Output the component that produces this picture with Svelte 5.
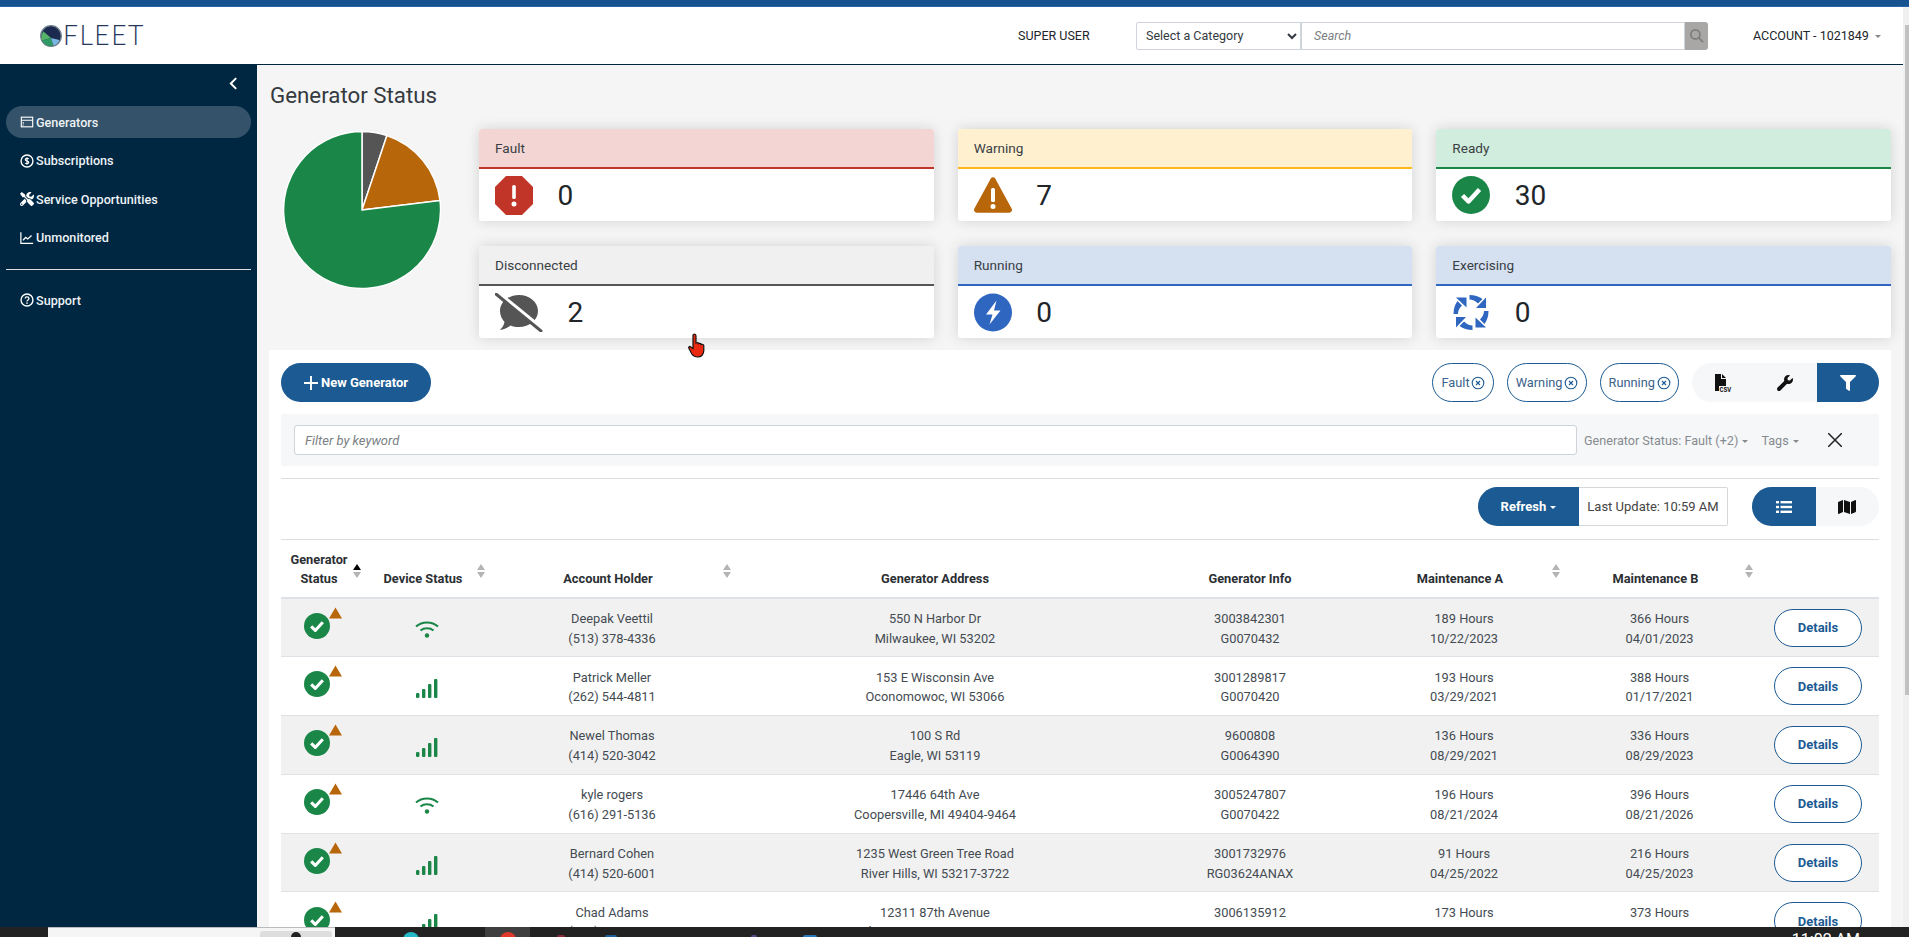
<script>
  const nav = [
    { id: 'gen', label: 'Generators', active: true },
    { id: 'sub', label: 'Subscriptions' },
    { id: 'svc', label: 'Service Opportunities' },
    { id: 'unm', label: 'Unmonitored' }
  ];
  const cards = [
    { key: 'fault', label: 'Fault', n: 0 },
    { key: 'warning', label: 'Warning', n: 7 },
    { key: 'ready', label: 'Ready', n: 30 },
    { key: 'disc', label: 'Disconnected', n: 2 },
    { key: 'running', label: 'Running', n: 0 },
    { key: 'exercising', label: 'Exercising', n: 0 }
  ];
  const rows = [
    ['Deepak Veettil', '(513) 378-4336', '550 N Harbor Dr', 'Milwaukee, WI 53202', '3003842301', 'G0070432', '189 Hours', '10/22/2023', '366 Hours', '04/01/2023', 'wifi'],
    ['Patrick Meller', '(262) 544-4811', '153 E Wisconsin Ave', 'Oconomowoc, WI 53066', '3001289817', 'G0070420', '193 Hours', '03/29/2021', '388 Hours', '01/17/2021', 'bars'],
    ['Newel Thomas', '(414) 520-3042', '100 S Rd', 'Eagle, WI 53119', '9600808', 'G0064390', '136 Hours', '08/29/2021', '336 Hours', '08/29/2023', 'bars'],
    ['kyle rogers', '(616) 291-5136', '17446 64th Ave', 'Coopersville, MI 49404-9464', '3005247807', 'G0070422', '196 Hours', '08/21/2024', '396 Hours', '08/21/2026', 'wifi'],
    ['Bernard Cohen', '(414) 520-6001', '1235 West Green Tree Road', 'River Hills, WI 53217-3722', '3001732976', 'RG03624ANAX', '91 Hours', '04/25/2022', '216 Hours', '04/25/2023', 'bars'],
    ['Chad Adams', '(414) 444-4444', '12311 87th Avenue', 'Pleasant Prairie, WI 53158', '3006135912', 'G0070000', '173 Hours', '10/06/2023', '373 Hours', '10/05/2025', 'bars']
  ];
  const toolsD = 'M501.1 395.7L384 278.6c-23.1-23.1-57.6-27.6-85.4-13.9L192 158.1V96L64 0 0 64l96 128h62.1l106.6 106.6c-13.6 27.8-9.2 62.3 13.9 85.4l117.1 117.1c14.6 14.6 38.2 14.6 52.7 0l52.7-52.7c14.5-14.6 14.5-38.2 0-52.7zM331.7 225c28.3 0 54.9 11 74.9 31l19.4 19.4c15.8-6.9 30.8-16.5 43.8-29.5 37.1-37.1 49.7-89.3 37.9-136.7-2.2-9-13.5-12.1-20.1-5.5l-74.4 74.4-67.9-11.3L334 98.9l74.4-74.4c6.6-6.6 3.4-17.9-5.7-20.2-47.4-11.7-99.6.9-136.6 37.9-28.5 28.5-41.9 66.1-41.2 103.6l82.1 82.1c8.1-1.9 16.5-2.9 24.7-2.9zm-103.9 82l-56.7-56.7L18.7 402.8c-25 25-25 65.5 0 90.5s65.5 25 90.5 0l123.6-123.6c-7.6-19.9-9.9-41.6-5-62.7zM64 472c-13.2 0-24-10.8-24-24 0-13.3 10.7-24 24-24s24 10.7 24 24c0 13.2-10.7 24-24 24z';
</script>

{#snippet sortIcon(active)}
  <svg class="sort" viewBox="0 0 8 14" width="8" height="14">
    <path d="M4 0 8 6H0z" fill={active ? '#000' : '#b4b4b4'} />
    <path d="M4 14 0 8h8z" fill="#b4b4b4" />
  </svg>
{/snippet}

{#snippet chipX()}
  <svg class="chipx" viewBox="0 0 14 14" width="14" height="14" fill="none" stroke="#1b5a92" stroke-width="1.1">
    <circle cx="7" cy="7" r="5.8" />
    <path d="M5 5l4 4M9 5l-4 4" />
  </svg>
{/snippet}

{#snippet caret()}
  <span class="caret"></span>
{/snippet}

{#snippet checkCircle(size)}
  <svg viewBox="0 0 38 38" width={size} height={size}>
    <circle cx="19" cy="19" r="19" fill="#1a8647" />
    <path d="M10.5 19.500 16.500 25.500 27.500 13.500" fill="none" stroke="#fff" stroke-width="4.500" stroke-linejoin="round" />
  </svg>
{/snippet}

{#snippet navIcon(id)}
  <svg class="navicon" viewBox="0 0 16 16" width="14" height="14" fill="none" stroke="#fff" stroke-width="1.3">
    {#if id === 'gen'}
      <rect x="1.500" y="2.500" width="13" height="11" />
      <path d="M1.500 6h13M3 9h1.500M3 11.500h1" />
    {:else if id === 'sub'}
      <circle cx="8" cy="8" r="6.800" stroke-width="1.600" />
      <path d="M10 5.600C9.400 4.900 6.200 4.600 6 6.400c-.2 2 4.200 1.200 4 3.200-.2 1.800-3.600 1.500-4.200.7M8 3.800v8.400" />
    {:else if id === 'svc'}
      <path d={toolsD} fill="#fff" stroke="none" transform="scale(.03125)" />
    {:else if id === 'unm'}
      <path d="M1 1.500v12.600h14" stroke-width="1.400" />
      <path d="M3.500 10.500l3-3.200 2.400 1.800 4.300-4" stroke-width="1.500" />
    {:else}
      <circle cx="8" cy="8" r="6.800" stroke-width="1.600" />
      <path d="M5.900 6.200C6 3.800 10.200 3.800 10.200 6.200c0 1.800-2.200 1.600-2.200 3.400" stroke-width="1.500" />
      <circle cx="8" cy="11.600" r=".9" fill="#fff" stroke="none" />
    {/if}
  </svg>
{/snippet}

{#snippet cardIcon(key)}
  {#if key === 'fault'}
    <svg class="cicon" viewBox="0 0 38 39" width="38" height="39">
      <path d="M11 0h16l11 11v17L27 39H11L0 28V11z" fill="#c13529" />
      <rect x="17.200" y="9" width="3.600" height="14" rx="1.600" fill="#fff" />
      <circle cx="19" cy="28" r="2.500" fill="#fff" />
    </svg>
  {:else if key === 'warning'}
    <svg class="cicon" viewBox="0 0 38 36" width="38" height="36">
      <path d="M16.800 1.500a2.600 2.600 0 0 1 4.400 0L37.600 31.500a2.800 2.800 0 0 1-2.400 4.200H2.800a2.800 2.800 0 0 1-2.400-4.200z" fill="#b8660a" />
      <rect x="17" y="11" width="4" height="14" rx="1.500" fill="#fff" />
      <circle cx="19" cy="29.500" r="2.500" fill="#fff" />
    </svg>
  {:else if key === 'ready'}
    {@render checkCircle(38)}
  {:else if key === 'disc'}
    <svg class="cicon wide" viewBox="0 0 48 39" width="48" height="39">
      <path d="M24 2c10.500 0 19 7 19 16s-8.500 16-19 16c-3 0-6-.6-8.500-1.600C13 34.500 9 37 5 37c2-2 4-5 4.500-8C6.800 26 5 22.200 5 18 5 9 13.500 2 24 2z" fill="#555" />
      <path d="M0 -2 48 37" stroke="#fff" stroke-width="5" />
      <path d="M1 1 46 38" stroke="#555" stroke-width="3" stroke-linecap="round" />
    </svg>
  {:else if key === 'running'}
    <svg class="cicon" viewBox="0 0 38 39" width="38" height="39">
      <circle cx="19" cy="19.500" r="19" fill="#2f66c0" />
      <path d="M22.500 7.500 12 21.500h6.500L15.500 31.500 26.500 17.500h-6.500z" fill="#fff" />
    </svg>
  {:else}
    <svg class="cicon" viewBox="-19 -19.500 38 39" width="38" height="39">
      {#each [0, 90, 180, 270] as r}
        <g transform={`rotate(${r})`} fill="#2f66c0">
          <path d="M-1.500-17.500V-13Q3-13 7-9L11.500-13.500Q6-17.500-1.500-17.500z" />
          <path d="M15-15V-4.500H5z" />
        </g>
      {/each}
    </svg>
  {/if}
{/snippet}

<div class="page">
  <div class="topbar"></div>
  <div class="shell">
    <div class="viewport">
      <header class="header">
        <div class="logo">
          <svg viewBox="0 0 22 22" width="22" height="22">
            <circle cx="11" cy="11" r="10.300" fill="#1b2a4e" stroke="#71808f" stroke-width="1.300" />
            <path d="M3.500 6.500 11 13 2 15.500A9.500 9.500 0 0 1 3.500 6.500z" fill="#57b36a" />
            <path d="M2 15.500 11 13l2.500 7.500A9.500 9.500 0 0 1 2 15.500z" fill="#2f9a63" />
            <path d="M11 13l8.500 2A9.500 9.500 0 0 1 13.500 20.500z" fill="#7cb7e4" />
          </svg>
          <span>FLEET</span>
        </div>
        <span class="super">SUPER USER</span>
        <div class="searchbox">
          <select class="category"><option>Select a Category</option></select>
          <input class="search" placeholder="Search" />
          <button class="searchbtn" aria-label="Search">
            <svg viewBox="0 0 16 16" width="15" height="15" fill="none" stroke="#7f7c7c" stroke-width="1.8">
              <circle cx="6.800" cy="6.800" r="4.800" /><path d="M10.300 10.300 15 15" />
            </svg>
          </button>
        </div>
        <span class="account">ACCOUNT - 1021849 {@render caret()}</span>
      </header>

      <div class="body">
        <aside class="sidebar">
          <div class="collapse">
            <svg viewBox="0 0 10 14" width="9" height="13" fill="none" stroke="#fff" stroke-width="2.2"><path d="M8 1 2 7l6 6" /></svg>
          </div>
          <nav class="navlist">
            {#each nav as n}
              <div class="navitem" class:active={n.active}>{@render navIcon(n.id)}<span>{n.label}</span></div>
            {/each}
          </nav>
          <div class="navdivider"></div>
          <div class="navitem">{@render navIcon('sup')}<span>Support</span></div>
        </aside>

        <main class="main">
          <h1>Generator Status</h1>
          <section class="summary">
            <svg class="pie" viewBox="-80 -80 160 160" width="160" height="160">
              <path d="M0 0V-78.500A78.500 78.500 0 0 1 24.900-74.400z" fill="#555" stroke="#fff" stroke-width="1.500" />
              <path d="M0 0 24.900-74.400A78.500 78.500 0 0 1 78-9.500z" fill="#b8660a" stroke="#fff" stroke-width="1.500" />
              <path d="M0 0 78-9.500A78.500 78.500 0 1 1 0-78.500z" fill="#1a8647" stroke="#fff" stroke-width="1.500" />
            </svg>
            <div class="cards">
              {#each cards as c}
                <article class="card {c.key}">
                  <div class="card-head">{c.label}</div>
                  <div class="card-body">{@render cardIcon(c.key)}<span class="num">{c.n}</span></div>
                </article>
              {/each}
            </div>
          </section>

          <section class="panel">
            <div class="actions">
              <button class="newgen">
                <svg viewBox="0 0 14 14" width="14" height="14" stroke="#fff" stroke-width="1.900"><path d="M7 0v14M0 7h14" /></svg>
                New Generator
              </button>
              <div class="chips">
                <span class="chip">Fault {@render chipX()}</span>
                <span class="chip">Warning {@render chipX()}</span>
                <span class="chip">Running {@render chipX()}</span>
              </div>
              <div class="seg tools">
                <span class="segitem">
                  <svg viewBox="0 0 18 18" width="18" height="18">
                    <path d="M1 0h6v5h5v7H5v5H1z" fill="#111" /><path d="M8 0l4 4H8z" fill="#111" />
                    <text x="5.500" y="17.500" class="csv">CSV</text>
                  </svg>
                </span>
                <span class="segitem">
                  <svg viewBox="0 0 512 512" width="16" height="16"><path fill="#111" d="M507.730 109.100c-2.240-9.030-13.540-12.090-20.120-5.510l-74.360 74.360-67.880-11.310-11.310-67.880 74.360-74.360c6.620-6.620 3.430-17.900-5.660-20.160-47.380-11.740-99.550.91-136.580 37.930-39.640 39.640-50.550 97.100-34.050 147.200L18.740 402.760c-24.990 24.990-24.990 65.510 0 90.500 24.990 24.990 65.510 24.990 90.500 0l213.210-213.210c50.120 16.710 107.470 5.680 147.370-34.220 37.070-37.070 49.700-89.320 37.910-136.730z" /></svg>
                </span>
                <span class="segitem on">
                  <svg viewBox="0 0 512 512" width="16" height="16"><path fill="#fff" d="M487.976 0H24.028C2.710 0-8.047 25.866 7.058 40.971L192 225.941V432c0 7.831 3.821 15.170 10.237 19.662l80 55.980C298.020 518.690 320 507.493 320 487.980V225.941l184.947-184.970C520.021 25.896 509.338 0 487.976 0z" /></svg>
                </span>
              </div>
            </div>

            <div class="filters">
              <input class="keyword" placeholder="Filter by keyword" />
              <span class="fdrop status">Generator Status: Fault (+2) {@render caret()}</span>
              <span class="fdrop tags">Tags {@render caret()}</span>
              <svg class="fclose" viewBox="0 0 14 14" width="14" height="14" stroke="#222" stroke-width="1.500"><path d="M0 0l14 14M14 0 0 14" /></svg>
            </div>

            <div class="toolbar">
              <button class="refresh">Refresh {@render caret()}</button>
              <span class="lastupdate">Last Update: 10:59 AM</span>
              <div class="seg views">
                <span class="segitem on">
                  <svg viewBox="0 0 16 14" width="16" height="14" fill="#fff">
                    <rect x="0" y="1" width="3" height="2.400" /><rect x="0" y="5.800" width="3" height="2.400" /><rect x="0" y="10.600" width="3" height="2.400" />
                    <rect x="4.500" y="1" width="11.500" height="2.400" /><rect x="4.500" y="5.800" width="11.500" height="2.400" /><rect x="4.500" y="10.600" width="11.500" height="2.400" />
                  </svg>
                </span>
                <span class="segitem">
                  <svg viewBox="0 0 576 512" width="18" height="16"><path fill="#111" d="M0 117.660v346.320c0 11.320 11.430 19.060 21.940 14.860L160 416V32L20.120 87.950A32.006 32.006 0 0 0 0 117.660zM192 416l192 64V96L192 32v384zM554.060 33.160L416 96v384l139.880-55.950A31.996 31.996 0 0 0 576 394.340V48.020c0-11.320-11.430-19.060-21.940-14.860z" /></svg>
                </span>
              </div>
            </div>

            <table>
              <colgroup>
                <col class="c1" /><col class="c2" /><col class="c3" /><col class="c4" /><col class="c5" /><col class="c6" /><col class="c7" /><col class="c8" />
              </colgroup>
              <thead>
                <tr>
                  <th class="shift">Generator<br />Status<span class="arrow">{@render sortIcon(true)}</span></th>
                  <th class="shift">Device Status<span class="arrow">{@render sortIcon(false)}</span></th>
                  <th class="shift">Account Holder<span class="arrow">{@render sortIcon(false)}</span></th>
                  <th>Generator Address</th>
                  <th>Generator Info</th>
                  <th class="shift">Maintenance A<span class="arrow tight">{@render sortIcon(false)}</span></th>
                  <th class="shift">Maintenance B<span class="arrow tight">{@render sortIcon(false)}</span></th>
                  <th></th>
                </tr>
              </thead>
              <tbody>
                {#each rows as r}
                  <tr>
                    <td class="statuscell">
                      <span class="status-stack">
                        {@render checkCircle(26)}
                        <svg class="badge" viewBox="0 0 14 12" width="13" height="12"><path d="M7 0 14 12H0z" fill="#b8660a" /></svg>
                      </span>
                    </td>
                    <td class="devcell">
                      {#if r[10] === 'wifi'}
                        <svg class="wifi" viewBox="0 0 24 18" width="24" height="18" fill="none" stroke="#1a8647" stroke-width="2">
                          <path d="M1 6.500C7 1 17 1 23 6.500" /><path d="M5.500 10.500C9 7.500 15 7.500 18.500 10.500" />
                          <circle cx="12" cy="15.500" r="2.200" fill="#1a8647" stroke="none" />
                        </svg>
                      {:else}
                        <svg viewBox="0 0 22 19" width="22" height="19" fill="#1a8647">
                          <rect x="0" y="14" width="3.400" height="5" rx="1.200" /><rect x="6" y="10" width="3.400" height="9" rx="1" />
                          <rect x="12" y="5" width="3.400" height="14" rx="1" /><rect x="18" y="0" width="3.400" height="19" rx="1" />
                        </svg>
                      {/if}
                    </td>
                    <td>{r[0]}<br />{r[1]}</td>
                    <td>{r[2]}<br />{r[3]}</td>
                    <td>{r[4]}<br />{r[5]}</td>
                    <td>{r[6]}<br />{r[7]}</td>
                    <td>{r[8]}<br />{r[9]}</td>
                    <td class="actioncell"><button class="details">Details</button></td>
                  </tr>
                {/each}
              </tbody>
            </table>
          </section>
        </main>
      </div>
      <svg class="cursor" viewBox="0 0 20 26" width="20" height="26">
        <path d="M6.500 1c1.200 0 1.500.8 1.500 2v7l1-.3c.8-.3 1.500.3 1.500 1l1-.3c.8-.2 1.500.3 1.500 1.100l1-.2c1-.2 1.800.5 1.800 1.500v5c0 3.500-2.500 6.200-6 6.200-3 0-4.500-1-6-3L1 15.500c-.8-1 .3-2.500 1.500-1.800L5 15.500V3c0-1.200.4-2 1.500-2z" fill="#ea2a10" stroke="#111" stroke-width="1.200" />
      </svg>
    </div>
    <div class="scrollbar"><span class="thumb"></span></div>
  </div>
  <footer class="taskbar">
    <div class="tbwindow"><span class="tbbtn"><i></i></span></div>
    <span class="dot teal"></span>
    <span class="tbactive"><span class="dot red"></span></span>
    <span class="tip t1"></span>
    <span class="tip t2"></span>
    <span class="tip t3"></span>
    <span class="tip t4"></span>
    <span class="clock">11:02 AM</span>
  </footer>
</div>

<style>
  :global(body) { margin: 0; background: #f5f5f5; }
  * { box-sizing: border-box; }
  .page {
    height: 937px;
    display: flex;
    flex-direction: column;
    overflow: hidden;
    font-family: Roboto, "Liberation Sans", sans-serif;
    font-size: 13px;
    color: #343a40;
  }
  .topbar { height: 7px; flex: none; background: #15528f; border-bottom: 1px solid #2a66a5; }
  .shell { flex: 1; min-height: 0; display: flex; }
  .viewport { flex: 1; min-width: 0; display: flex; flex-direction: column; position: relative; }
  .scrollbar { width: 6px; flex: none; background: #f0f0f0; padding-top: 18px; display: flex; justify-content: flex-end; }
  .thumb { width: 4px; height: 670px; background: #c1c1c1; }

  .header {
    height: 58px;
    flex: none;
    background: #fff;
    border-bottom: 1px solid #002741;
    display: flex;
    align-items: center;
  }
  .logo { display: flex; align-items: center; margin-left: 40px; width: 978px; }
  .logo span { font-family: Lato, sans-serif; font-weight: 300; font-size: 26.500px; letter-spacing: 1.500px; color: #26375c; margin-left: 1px; line-height: 1; }
  .super { font-size: 12.500px; color: #212529; width: 118px; }
  .searchbox { display: flex; height: 28px; width: 572px; }
  .category {
    width: 165px;
    border: 1px solid #ced4da;
    background: #fff;
    font: 12.500px Roboto, sans-serif;
    color: #343a40;
    padding-left: 5px;
    border-radius: 2px 0 0 2px;
    outline: none;
  }
  .search {
    flex: 1;
    min-width: 0;
    border: 1px solid #ced4da;
    border-left-width: 1px;
    font: italic 12.500px Roboto, sans-serif;
    padding: 0 12px;
    outline: none;
  }
  .search::placeholder, .keyword::placeholder { color: #7b7f84; opacity: 1; }
  .searchbtn { width: 23px; border: 0; padding: 0; background: #a9a6a6; border-radius: 0 3px 3px 0; display: flex; align-items: center; justify-content: center; }
  .account { margin-left: 45px; font-size: 12.500px; color: #212529; white-space: nowrap; }
  .caret {
    display: inline-block;
    width: 0;
    height: 0;
    margin-left: 1px;
    vertical-align: 2px;
    border-top: 3.500px solid currentColor;
    border-left: 3.500px solid transparent;
    border-right: 3.500px solid transparent;
  }
  .account .caret { color: #888; margin-left: 3px; }

  .body { flex: 1; min-height: 0; display: flex; }
  .sidebar { width: 257px; flex: none; background: #002741; color: #fff; padding: 0 6px; }
  .collapse { height: 41px; padding: 12px 0 0 223px; line-height: 0; }
  .navlist { display: flex; flex-direction: column; }
  .navitem { height: 32px; margin-bottom: 6.500px; display: flex; align-items: center; padding-left: 14px; border-radius: 16px; font-weight: 500; font-size: 12.600px; color: #eef2f5; }
  .navitem.active { background: #34536a; }
  .navicon { margin-right: 2px; flex: none; }
  .navdivider { height: 1px; background: #d9dfe3; margin: 9px 0 14px; }

  .main { flex: 1; min-width: 0; overflow: hidden; padding: 0 12px; background: #f5f5f5; }
  h1 { margin: 0; padding: 16.500px 0 0 1px; height: 64px; font-size: 22.300px; line-height: 26px; font-weight: 400; color: #343a40; }
  .summary { display: flex; height: 221px; }
  .pie { margin: 1px 0 0 13px; flex: none; }
  .cards {
    margin-left: 37px;
    flex: 1;
    display: grid;
    grid-template-columns: repeat(3, 1fr);
    grid-auto-rows: 92px;
    column-gap: 24px;
    row-gap: 25px;
    align-self: flex-start;
  }
  .card { background: #fff; border-radius: 3px; box-shadow: 0 0 14px rgba(0, 0, 0, .14); overflow: hidden; }
  .card-head { height: 40px; padding: 0 16px; display: flex; align-items: center; font-size: 13.600px; color: #3a3f44; border-bottom: 2px solid; }
  .card-body { height: 52px; padding: 0 16px; display: flex; align-items: center; }
  .cicon { flex: none; }
  .num { font-size: 28px; margin-left: 24.500px; color: #212529; }
  .fault .card-head { background: #f3d6d3; border-color: #c13529; }
  .warning .card-head { background: #fff0d0; border-color: #ffb81c; }
  .ready .card-head { background: #d1eddd; border-color: #1a8647; }
  .disc .card-head { background: #f0f0f0; border-color: #555; }
  .running .card-head, .exercising .card-head { background: #d5e0f1; border-color: #2f66c0; }

  .panel { background: #fff; padding: 13px 12px 0; }
  .actions { display: flex; height: 39px; align-items: stretch; }
  .newgen {
    width: 150px;
    border: 0;
    border-radius: 20px;
    background: #1b5a92;
    color: #fff;
    font: 700 13px Roboto, sans-serif;
    display: flex;
    align-items: center;
    justify-content: center;
    gap: 3px;
    padding: 0;
  }
  .chips { margin-left: auto; display: flex; gap: 13px; }
  .chip {
    border: 1px solid #1b5a92;
    border-radius: 20px;
    padding: 0 7.500px 0 8px;
    display: flex;
    align-items: center;
    gap: 1.500px;
    font-size: 12.800px;
    color: #3c628a;
    white-space: nowrap;
  }
  .chipx { flex: none; }
  .seg { display: flex; background: #f6f7f9; border-radius: 20px; overflow: hidden; }
  .segitem { display: flex; align-items: center; justify-content: center; flex: 1; }
  .segitem.on { background: #1b5a92; }
  .tools { width: 187px; margin-left: 13px; }
  .csv { font: 700 6.500px "Liberation Mono", monospace; fill: #111; }
  .filters {
    height: 52px;
    margin-top: 12px;
    background: #f6f7f9;
    display: flex;
    align-items: center;
    padding-left: 13px;
  }
  .keyword {
    width: 1283px;
    height: 30px;
    border: 1px solid #ced4da;
    border-radius: 3px;
    padding: 0 10px;
    font: italic 13px Roboto, sans-serif;
    outline: none;
  }
  .fdrop { color: #868b90; font-size: 12.600px; white-space: nowrap; }
  .status { margin-left: 7px; }
  .tags { margin-left: 13px; }
  .fclose { margin-left: 29px; }
  .toolbar {
    margin-top: 12px;
    border-top: 1px solid #dcdfe2;
    border-bottom: 1px solid #dcdfe2;
    height: 62px;
    padding-top: 8px;
    display: flex;
    align-items: flex-start;
    justify-content: flex-end;
  }
  .refresh {
    width: 101px;
    height: 39px;
    border: 0;
    border-radius: 20px 0 0 20px;
    background: #1b5a92;
    color: #fff;
    font: 700 13px Roboto, sans-serif;
    padding: 0;
  }
  .lastupdate {
    width: 149px;
    height: 39px;
    border: 1px solid #d5d8db;
    border-left: 0;
    border-radius: 0 2px 2px 0;
    display: flex;
    align-items: center;
    justify-content: center;
    font-size: 13px;
    color: #444;
  }
  .views { width: 127px; height: 39px; margin-left: 24px; }

  table { width: 1598px; table-layout: fixed; border-collapse: collapse; }
  .c1 { width: 84px; } .c2 { width: 124px; } .c3 { width: 246px; } .c4 { width: 400px; }
  .c5 { width: 230px; } .c6 { width: 198px; } .c7 { width: 193px; } .c8 { width: 123px; }
  th {
    position: relative;
    height: 58px;
    padding: 0 0 9px;
    font-size: 12.800px;
    font-weight: 700;
    line-height: 19px;
    color: #2b2f33;
    vertical-align: bottom;
    border-bottom: 2px solid #dee2e6;
  }
  th.shift { padding-right: 8px; }
  .arrow { position: absolute; right: 4px; top: 24px; line-height: 0; }
  .arrow.tight { right: 3px; }
  .sort { display: block; }
  tbody tr { height: 58.800px; }
  tbody tr:nth-child(odd) { background: #f1f1f1; }
  td {
    padding: 2px 0 0;
    text-align: center;
    vertical-align: middle;
    font-size: 12.800px;
    line-height: 19.500px;
    color: #444b52;
    border-bottom: 1px solid #dee2e6;
  }
  .status-stack { position: relative; display: inline-block; line-height: 0; margin: 0 4px 0 0; }
  .badge { position: absolute; left: 25px; top: -6px; }
  .statuscell { padding-right: 8px; }
  .devcell { line-height: 0; padding-top: 5px; }
  .wifi { margin-top: -2px; }
  .actioncell { padding-top: 0; }
  .details {
    width: 88px;
    height: 38px;
    background: #fff;
    border: 1px solid #1b5a92;
    border-radius: 19px;
    color: #1b5a92;
    font: 700 13px Roboto, sans-serif;
    padding: 0;
    margin-left: 1px;
    vertical-align: middle;
  }
  .cursor { position: absolute; left: 688px; top: 326px; }

  .taskbar { height: 10px; flex: none; background: #222; display: flex; overflow: hidden; }
  .tbwindow { width: 287px; margin-left: 48px; background: #f5f5f5; border-top: 1px solid #bbb; padding: 3px 3px 0 0; display: flex; justify-content: flex-end; }
  .tbbtn { width: 72px; background: #ddd; border-radius: 3px 3px 0 0; display: flex; justify-content: center; }
  .tbbtn i { width: 10px; height: 10px; background: #222; border-radius: 50%; margin-top: 1px; }
  .dot { width: 16px; height: 16px; border-radius: 50%; display: block; margin-top: 5px; flex: none; }
  .teal { background: #22b8c8; margin-left: 68px; }
  .tbactive { width: 45px; margin-left: 66px; background: #3f3f3f; display: flex; justify-content: center; }
  .red { background: #e0392b; }
  .tip { height: 2px; margin-top: 8px; flex: none; border-radius: 2px 2px 0 0; }
  .t1 { width: 8px; margin-left: 27px; background: #8a2a3a; }
  .t2 { width: 12px; margin-left: 40px; background: #1f5f9a; }
  .t3 { width: 6px; margin-left: 134px; background: #5a4a8a; }
  .t4 { width: 14px; margin-left: 46px; background: #2a78b8; }
  .clock { margin-left: auto; margin-right: 49px; color: #fff; font-size: 16px; line-height: 16px; padding-top: 5px; }
</style>
